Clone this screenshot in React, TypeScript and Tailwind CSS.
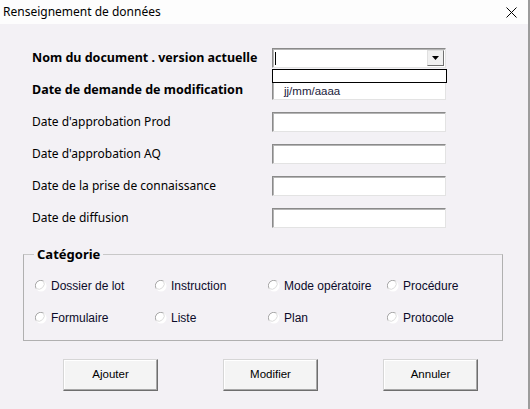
import React from 'react';

const font = { fontFamily: '"Noto Sans", "DejaVu Sans", sans-serif' };
const narrow = { fontFamily: '"Liberation Sans", Arial, sans-serif' };

function TextBox({ value }: { value?: string }) {
  return (
    <div className="h-[20px] w-[174px] bg-white border border-t-[#8a8a8a] border-l-[#8a8a8a] border-b-[#e3e3e3] border-r-[#e3e3e3] shadow-[inset_1px_1px_0_#b4b4b4] flex items-end pl-[11px] pb-[2px] text-[11.5px] leading-none text-[#1a1a3a]" style={narrow}>
      {value}
    </div>
  );
}

function Radio({ label }: { label: string }) {
  return (
    <div className="flex items-center gap-[4px] h-[16px]">
      <svg width="12" height="12" viewBox="0 0 12 12">
        <circle cx="6" cy="6" r="5.5" fill="#ffffff" />
        <path d="M1 8.5 A5.5 5.5 0 0 1 8.5 1" stroke="#a8a8a8" strokeWidth="1" fill="none" />
        <path d="M8.5 1 A5.5 5.5 0 0 1 1 8.5" stroke="#dcdcdc" strokeWidth="1" fill="none" />
      </svg>
      <span className="text-[12px] text-[#0b0b2a] leading-none" style={narrow}>{label}</span>
    </div>
  );
}

function Button({ label }: { label: string }) {
  return (
    <div className="w-[95px] h-[32px] bg-[#f4f4f4] border border-[#d6d6d6] border-b-[#6e6e6e] border-r-[#6e6e6e] shadow-[inset_-1px_-1px_0_#a8a8a8,inset_1px_1px_0_#ffffff] flex items-center justify-center text-[11.5px] text-black" style={narrow}>
      {label}
    </div>
  );
}

export default function App() {
  const rows = [
    'Date d\'approbation Prod',
    'Date d\'approbation AQ',
    'Date de la prise de connaissance',
    'Date de diffusion',
  ];
  return (
    <div className="w-[530px] h-[409px] bg-[#f3f1f5] relative border-r-2 border-[#9c9c9c] overflow-hidden" style={font}>
      <div className="h-[24px] bg-[#fdfdfd] flex items-center justify-between pl-[3px] pr-[11px]">
        <span className="text-[12px] text-black">Renseignement de données</span>
        <svg width="11" height="11" viewBox="0 0 11 11">
          <path d="M0.5 0.5 L10.5 10.5 M10.5 0.5 L0.5 10.5" stroke="#000" strokeWidth="1" />
        </svg>
      </div>

      <div className="flex flex-col gap-[12px] mt-[24px] pl-[32px]">
        <div className="flex items-center h-[20px]">
          <span className="w-[240px] text-[12.5px] font-bold text-black">Nom du document . version actuelle</span>
          <div className="relative h-[20px] w-[174px] bg-white border border-t-[#8a8a8a] border-l-[#8a8a8a] border-b-[#e3e3e3] border-r-[#e3e3e3] shadow-[inset_1px_1px_0_#b4b4b4] flex items-center justify-between pl-[2px] pr-[1px]">
            <div className="w-[1px] h-[13px] bg-black" />
            <div className="w-[17px] h-[16px] bg-[#f0f0f0] border border-[#e0e0e0] border-b-[#707070] border-r-[#707070] flex items-center justify-center">
              <svg width="7" height="4" viewBox="0 0 7 4">
                <path d="M0 0 H7 L3.5 4 Z" fill="#000" />
              </svg>
            </div>
          </div>
        </div>

        <div className="flex items-center h-[20px] relative">
          <span className="w-[240px] text-[12.5px] font-bold text-black">Date de demande de modification</span>
          <TextBox value="jj/mm/aaaa" />
          <div className="absolute left-[240px] top-[-11px] w-[175px] h-[14px] bg-white border border-black" />
        </div>

        {rows.map((r) => (
          <div key={r} className="flex items-center h-[20px]">
            <span className="w-[240px] text-[12px] text-black">{r}</span>
            <TextBox />
          </div>
        ))}
      </div>

      <div className="relative ml-[23px] mt-[26px] w-[480px] h-[87px] border border-[#b0b0b0] border-t-[#c8c8c8]">
        <span className="absolute left-[10px] top-[-10px] px-[3px] bg-[#f3f1f5] text-[13px] font-bold text-black leading-[18px]">Catégorie</span>
        <div className="grid grid-cols-[120px_113px_119px_1fr] gap-y-[16px] pl-[11px] pt-[23px]">
          <Radio label="Dossier de lot" />
          <Radio label="Instruction" />
          <Radio label="Mode opératoire" />
          <Radio label="Procédure" />
          <Radio label="Formulaire" />
          <Radio label="Liste" />
          <Radio label="Plan" />
          <Radio label="Protocole" />
        </div>
      </div>

      <div className="flex gap-[65px] pl-[63px] mt-[18px]">
        <Button label="Ajouter" />
        <Button label="Modifier" />
        <Button label="Annuler" />
      </div>
    </div>
  );
}
